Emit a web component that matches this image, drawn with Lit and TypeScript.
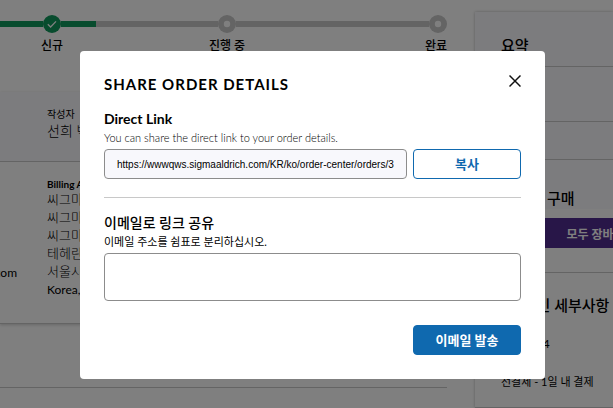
import { LitElement, html, css } from "lit";
import { customElement, property } from "lit/decorators.js";

@customElement("order-stepper")
export class OrderStepper extends LitElement {
  static styles = css`
    :host { display: flex; align-items: flex-start; padding-top: 15px; height: 42px; }
    .seg { height: 6px; margin-top: 6px; background: #c8c8c8; flex: none; }
    .lead { width: 43px; }
    .half { width: 35px; }
    .done { background: #10985c; }
    .near { flex: 122; }
    .far { flex: 193; }
    .step { width: 18px; display: flex; flex-direction: column; align-items: center; gap: 4px; }
    .last { align-items: flex-end; }
    .label { white-space: nowrap; font-size: 12px; line-height: 18px; font-weight: 500; }
    svg { display: block; width: 18px; height: 18px; }
  `;
  private ring() {
    return html`<svg viewBox="0 0 18 18" aria-hidden="true"><circle cx="9" cy="9" r="9" fill="#c8c8c8"/><circle cx="9" cy="9" r="3.2" fill="#fff"/></svg>`;
  }
  render() {
    return html`
      <div class="seg lead done"></div>
      <div class="step">
        <svg viewBox="0 0 18 18" aria-hidden="true"><circle cx="9" cy="9" r="9" fill="#10985c"/><path d="M4.8 9.2 7.6 12 13 6.4" fill="none" stroke="#fff" stroke-width="1.3"/></svg>
        <span class="label">신규</span>
      </div>
      <div class="seg half done"></div>
      <div class="seg near"></div>
      <div class="step">${this.ring()}<span class="label">진행 중</span></div>
      <div class="seg far"></div>
      <div class="step last">${this.ring()}<span class="label">완료</span></div>
    `;
  }
}

@customElement("order-page")
export class OrderPage extends LitElement {
  static styles = css`
    :host { display: flex; gap: 28px; align-items: flex-start; min-height: 100vh; background: #fff; overflow: hidden; }
    main { flex: 1; min-width: 0; }
    .card { margin-top: 35px; border-bottom: 1px solid #c8c8c8; box-shadow: 0 1px 3px #0003; }
    .top { background: #f8f8fc; height: 54px; padding-top: 15px; border-bottom: 1px solid #c8c8c8; padding-left: 47px; }
    .small { font-size: 10px; line-height: 14px; margin: 0; font-weight: 400; }
    .name { font-size: 14px; line-height: 20px; margin: 0; font-weight: 300; }
    .body { display: flex; height: 145px; padding-top: 16px; }
    .mail { display: flex; justify-content: flex-end; width: 17px; margin-right: 30px; padding-top: 86px; font-size: 12px; line-height: 18px; }
    h2 { font-size: 10px; line-height: 12px; margin: 0; font-weight: 700; }
    address { font-style: normal; font-size: 13px; line-height: 18px; font-weight: 300; }
    .latin { font-size: 12px; font-weight: 400; }
    hr { border: 0; border-top: 1px solid #c8c8c8; margin: 63px 0 0; }
    aside { flex: none; width: 138px; margin-top: 12px; box-shadow: 0 0 3px #0004; white-space: nowrap; }
    .tint { background: #f8f8fc; }
    .row { border-bottom: 1px solid #c8c8c8; box-sizing: border-box; }
    h3 { margin: 0; padding-left: 26px; font-size: 15px; line-height: 22px; font-weight: 500; }
    .r1 { height: 55px; padding-top: 22px; }
    .r2 { height: 55px; }
    .r3 { height: 38px; }
    .r4 { height: 113px; }
    .r4 h3 { padding-top: 27px; }
    .r5 { height: 135px; padding-top: 21px; }
    .r4 button { display: block; width: 200px; height: 30px; margin: 9px 0 0 26px; border: 0; background: #502d91; color: #fff; font: 700 12px "Lato", "Noto Sans CJK KR", sans-serif; border-radius: 3px; }
    aside p { margin: 0; padding-left: 26px; font-size: 11px; line-height: 16px; }
    aside .id { margin-top: 20px; font-size: 12px; }
    aside .pay { margin-top: 22px; }
  `;
  render() {
    return html`
      <main>
        <order-stepper></order-stepper>
        <section class="card">
          <div class="top"><p class="small">작성자</p><p class="name">선희 박</p></div>
          <div class="body">
            <div class="mail"><span>com</span></div>
            <div>
              <h2>Billing Address</h2>
              <address>씨그마<br />씨그마<br />씨그마<br />테헤란로<br />서울시<br /><span class="latin">Korea,</span></address>
            </div>
          </div>
        </section>
        <hr />
      </main>
      <aside>
        <div class="row tint r1"><h3>요약</h3></div>
        <div class="row tint r2"></div>
        <div class="row tint r3"></div>
        <div class="row r4"><h3 class="tint">견적 &amp; 구매</h3><button>모두 장바구니</button></div>
        <div class="row r5"><h3>e온라인 세부사항</h3><p class="id">3001234</p><p class="pay">선결제 - 1일 내 결제</p></div>
      </aside>
    `;
  }
}

@customElement("share-dialog")
export class ShareDialog extends LitElement {
  @property() link = "https://wwwqws.sigmaaldrich.com/KR/ko/order-center/orders/3";
  static styles = css`
    :host { display: block; background: #fff; border-radius: 4px; padding: 21px 24px 24px; color: #000; }
    header { display: flex; justify-content: space-between; align-items: flex-start; height: 37px; }
    h1 { margin: 0; font-size: 15px; line-height: 24px; font-weight: 700; letter-spacing: 1px; }
    .close { border: 0; background: none; padding: 0; width: 12px; height: 18px; }
    .close svg { display: block; width: 12px; height: 18px; }
    h2 { margin: 0; font-size: 14px; line-height: 20px; font-weight: 700; }
    .ko { font-weight: 500; }
    label { display: block; font-size: 11px; line-height: 16px; margin: 1px 0 3px; font-weight: 300; }
    .hint { font-weight: 400; }
    .row { display: flex; gap: 6px; }
    input, textarea { box-sizing: border-box; border: 1px solid #8c8c8c; border-radius: 4px; min-width: 0; outline: 0; }
    input { flex: 1; height: 30px; padding: 0 12px; background: #f8f8fc; font: 10px "Liberation Sans", Arial, sans-serif; color: #000; }
    textarea { display: block; width: 100%; height: 48px; resize: none; padding: 8px 12px; font: 12px "Lato", "Noto Sans CJK KR", sans-serif; }
    button { font-family: inherit; }
    .btn { width: 108px; height: 30px; box-sizing: border-box; border: 1px solid #0f69af; border-radius: 4px; font-size: 13px; line-height: 18px; font-weight: 700; padding: 0; }
    .outline { background: #fff; color: #0f69af; }
    .fill { background: #0f69af; color: #fff; }
    hr { border: 0; border-top: 1px solid #c8c8c8; margin: 18px 0 15px; }
    footer { display: flex; justify-content: flex-end; margin-top: 24px; }
  `;
  render() {
    return html`
      <header>
        <h1>SHARE ORDER DETAILS</h1>
        <button class="close" aria-label="Close"><svg viewBox="0 0 12 18"><path d="M0.5 3.5 11.5 14.5M11.5 3.5 0.5 14.5" stroke="#111" stroke-width="1.5" fill="none"/></svg></button>
      </header>
      <h2>Direct Link</h2>
      <label for="link">You can share the direct link to your order details.</label>
      <div class="row">
        <input id="link" readonly .value=${this.link} />
        <button class="btn outline">복사</button>
      </div>
      <hr />
      <h2 class="ko">이메일로 링크 공유</h2>
      <label class="hint" for="mails">이메일 주소를 쉼표로 분리하십시오.</label>
      <textarea id="mails"></textarea>
      <footer><button class="btn fill">이메일 발송</button></footer>
    `;
  }
}

@customElement("app-root")
export class AppRoot extends LitElement {
  static styles = css`
    :host { display: grid; overflow: hidden; height: 100vh; font-family: "Lato", "Noto Sans CJK KR", sans-serif; color: #000; }
    order-page, .shade { grid-area: 1 / 1; min-width: 0; }
    .shade { z-index: 1; background: rgb(0 0 0 / 50%); padding: 51px 68px 29px 80px; }
  `;
  render() {
    return html`
      <order-page inert></order-page>
      <div class="shade"><share-dialog role="dialog" aria-modal="true" aria-label="Share order details"></share-dialog></div>
    `;
  }
}
